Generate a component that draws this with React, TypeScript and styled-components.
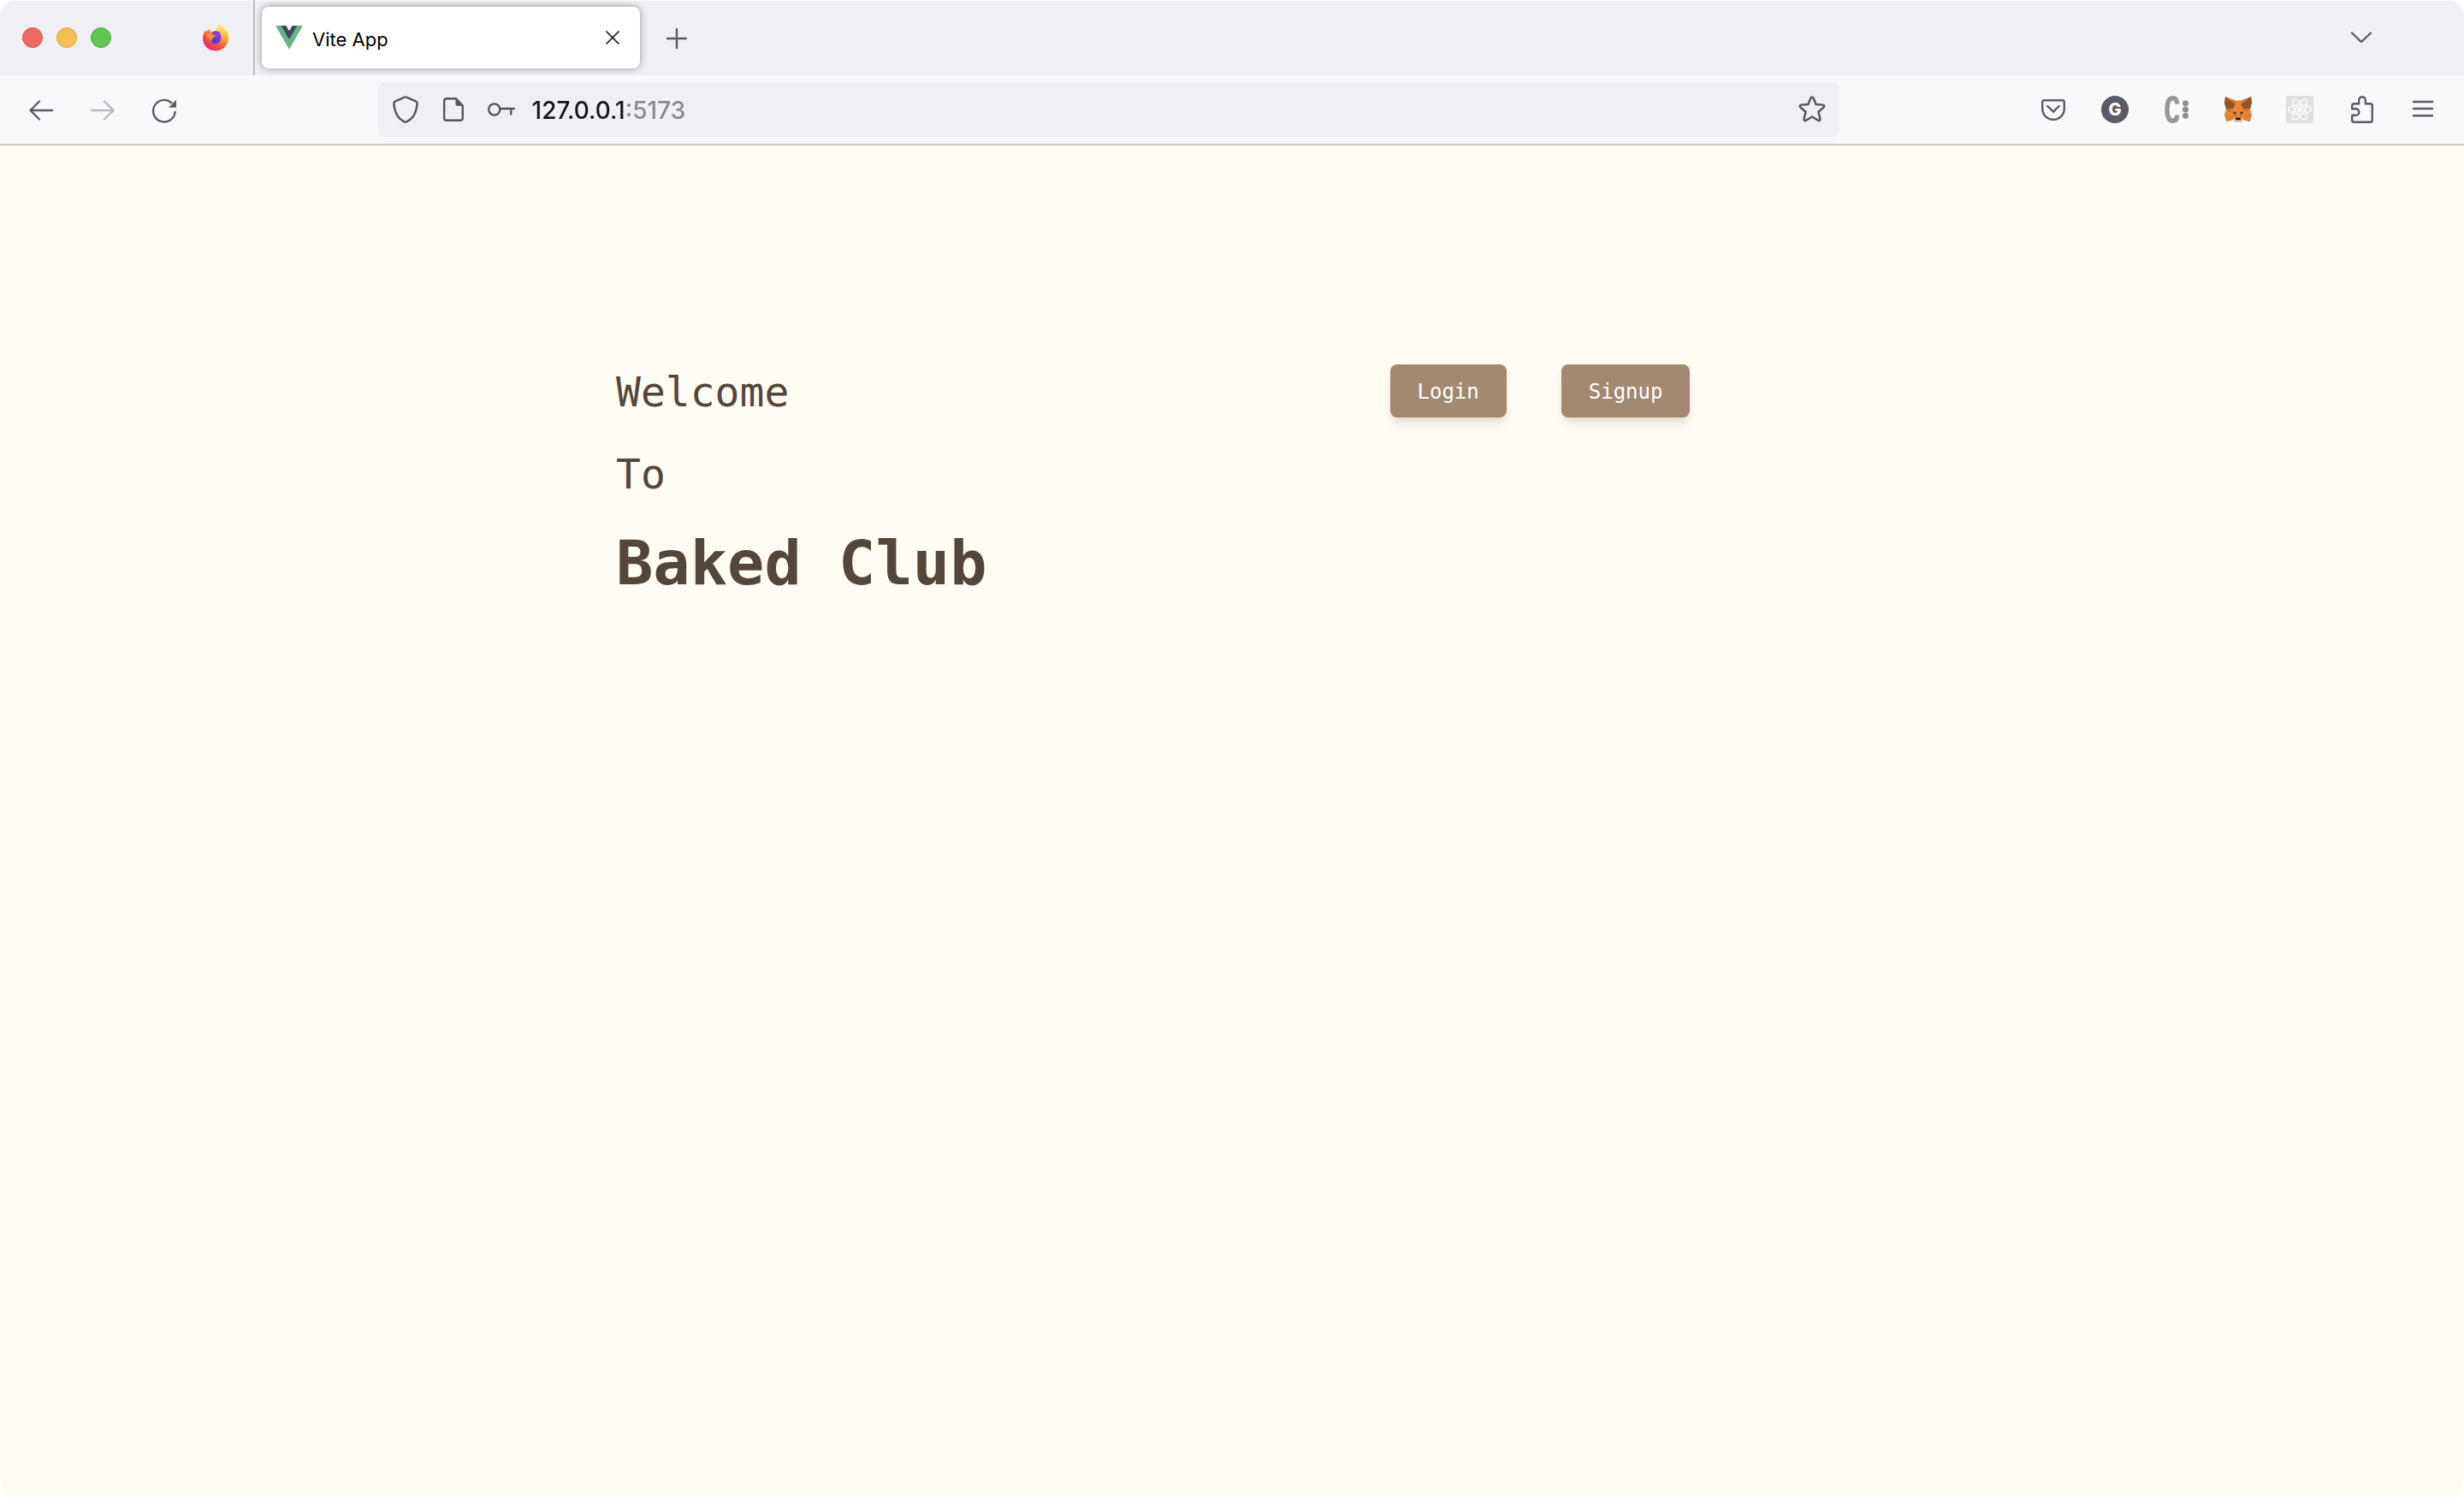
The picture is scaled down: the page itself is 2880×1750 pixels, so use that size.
import React from "react";
import styled, { createGlobalStyle } from "styled-components";

const GlobalStyle = createGlobalStyle`
  *, *::before, *::after { box-sizing: border-box; }
  body { margin: 0; background: #ffffff; }
  h1, p { margin: 0; }
  button, input { font: inherit; color: inherit; border: 0; margin: 0; padding: 0; background: none; }
  svg { display: block; }
`;

const ui = `Inter, "Liberation Sans", sans-serif`;
const mono = `"DejaVu Sans Mono", "Liberation Mono", monospace`;
const ink = "#5b5b66";

const Window = styled.div`
  display: flex;
  flex-direction: column;
  min-height: 100vh;
  overflow: hidden;
  border-radius: 20px;
  background: #fffcf4;
  font-family: ${ui};
`;

const TabStrip = styled.div`
  display: flex;
  align-items: center;
  height: 88px;
  background: #f0eff4;
  box-shadow: inset 0 1px 0 #fafafb;
`;

const WindowControls = styled.div`
  display: flex;
  gap: 16px;
  padding-left: 26px;
`;

const Light = styled.button<{ $fill: string; $edge: string }>`
  width: 24px;
  height: 24px;
  border-radius: 50%;
  background: ${(p) => p.$fill};
  border: 1px solid ${(p) => p.$edge};
`;

const PinnedTab = styled.button`
  display: grid;
  place-items: center;
  align-self: stretch;
  width: 92px;
  margin-left: 76px;
  padding-left: 2px;
  border-right: 2px solid #bdbdc1;
`;

const Tab = styled.div`
  display: flex;
  align-items: center;
  width: 442px;
  height: 72px;
  margin-left: 8px;
  padding: 0 16px;
  border-radius: 8px;
  background: #ffffff;
  box-shadow: 0 0 8px rgba(0, 0, 0, 0.4);
`;

const TabTitle = styled.button`
  display: flex;
  flex: 1;
  align-items: center;
  gap: 11px;
  font-size: 22px;
  line-height: 32px;
  color: #15141a;
`;

const TabLabel = styled.span`
  padding-top: 4px;
  color: #000000;
`;

const IconButton = styled.button<{ $width?: number; $dim?: boolean }>`
  display: grid;
  place-items: center;
  flex: none;
  width: ${(p) => p.$width ?? 72}px;
  height: 64px;
  color: ${ink};
  opacity: ${(p) => (p.$dim ? 0.4 : 1)};
`;

const TabListArea = styled.div`
  display: flex;
  flex: 1;
  justify-content: flex-end;
  padding-right: 84px;
`;

const Toolbar = styled.div`
  display: flex;
  align-items: center;
  height: 82px;
  padding: 0 12px;
  background: #f9f9fb;
  border-bottom: 2px solid #cccccf;
`;

const Group = styled.div`
  display: flex;
`;

const Spring = styled.div`
  flex: 1 1 0;
`;

const AddressArea = styled.div`
  flex: 8 1 0;
  min-width: 0;
`;

const AddressBar = styled.div`
  display: flex;
  align-items: center;
  gap: 24px;
  height: 64px;
  padding: 0 16px;
  border-radius: 8px;
  background: #f0eff4;
  color: #55555a;
`;

const AddressIcon = styled.button`
  flex: none;
  width: 32px;
  height: 32px;
`;

/* The host is dark and the port that follows it is grey. */
const Address = styled.input`
  flex: 1;
  min-width: 0;
  height: 40px;
  margin-left: -4px;
  padding-top: 2px;
  font-size: 28px;
  font-weight: 500;
  line-height: 40px;
  color: transparent;
  caret-color: #15141a;
  background: linear-gradient(90deg, #15141a 109px, #8a898e 109px);
  background-clip: text;
  -webkit-background-clip: text;
  outline: none;
`;

const Badge = styled.span`
  display: grid;
  place-items: center;
  width: 32px;
  height: 32px;
  border-radius: 50%;
  background: ${ink};
  color: #ffffff;
  font-size: 20px;
  font-weight: 800;
  line-height: 32px;
`;

const Page = styled.main`
  display: grid;
  grid-template-columns: 1fr 1fr;
  flex: 1;
  align-items: start;
  padding: 256px 25% 64px;
  font-family: ${mono};
  color: #53473c;
`;

const Greeting = styled.div`
  display: flex;
  flex-direction: column;
  gap: 32px;
`;

const Line = styled.p`
  font-size: 48px;
  line-height: 64px;
`;

const ClubName = styled.h1`
  font-size: 72px;
  line-height: 80px;
  font-weight: 700;
  white-space: nowrap;
`;

const Actions = styled.div`
  display: flex;
  justify-content: center;
  gap: 64px;
`;

const ActionButton = styled.button`
  padding: 17px 32px 15px;
  border-radius: 8px;
  background: #a38970;
  color: #ffffff;
  font-size: 24px;
  line-height: 30px;
  box-shadow: 0 8px 12px -2px rgba(0, 0, 0, 0.1), 0 4px 8px -2px rgba(0, 0, 0, 0.06);
`;

function Glyph({ children, size = 32 }: { children: React.ReactNode; size?: number }) {
  return (
    <svg
      width={size}
      height={size}
      viewBox="0 0 32 32"
      fill="none"
      stroke="currentColor"
      strokeWidth="2.4"
      strokeLinecap="round"
      strokeLinejoin="round"
      aria-hidden="true"
    >
      {children}
    </svg>
  );
}

const FirefoxLogo = () => (
  <svg width="32" height="32" viewBox="0 0 32 32" aria-hidden="true">
    <defs>
      <linearGradient id="ffBody" x1="0.85" y1="0.1" x2="0.25" y2="0.95">
        <stop offset="0" stopColor="#fff04f" />
        <stop offset="0.35" stopColor="#ffa436" />
        <stop offset="0.65" stopColor="#f8583a" />
        <stop offset="1" stopColor="#de2a72" />
      </linearGradient>
      <linearGradient id="ffFlame" x1="0.4" y1="0" x2="0.5" y2="1">
        <stop offset="0" stopColor="#fff261" />
        <stop offset="0.5" stopColor="#ffc83c" />
        <stop offset="1" stopColor="#ff8a36" stopOpacity="0" />
      </linearGradient>
      <radialGradient id="ffGlobe" cx="0.5" cy="0.75" r="0.75">
        <stop offset="0" stopColor="#4a3fb4" />
        <stop offset="0.5" stopColor="#6745da" />
        <stop offset="1" stopColor="#9b3ff0" />
      </radialGradient>
    </defs>
    <path
      d="M20.8 0.2C22.6 3.6 26 5 28 8.6C28.4 7.8 28.3 7 28.1 6.2C30.4 9 31.3 12.4 31.2 16.2C30.8 25 24.3 31.4 16 31.4C7.500 31.4 1 25 1 16.800C1 12.500 2.300 9.800 4.600 7.200L5.100 9.300C6.300 7.700 8.100 6.400 9.900 5.900C9.600 7.100 9.700 8.200 10.400 9.200C12.700 8.500 14 8.700 16.200 8.400C17 5.400 18.400 2.600 20.800 0.200Z"
      fill="url(#ffBody)"
    />
    <path
      d="M20.800 0.200C22.600 3.600 26 5 28.200 9C30.400 13.400 29.800 20 25.600 24C27 18 25 12.600 21.600 10.400C19.800 9.200 17.800 8.800 16.200 8.400C17 5.400 18.400 2.600 20.800 0.200Z"
      fill="url(#ffFlame)"
    />
    <circle cx="16" cy="17" r="6.200" fill="url(#ffGlobe)" />
    <path d="M12 9.800C14.500 7.500 19.500 7.800 22 10.800L20.600 11.200C22 12.400 22.800 14.200 22.200 16L14 14.500Z" fill="#8a3bea" />
    <path
      d="M4.800 12.600C7 11.200 9.500 11.400 12.600 12.800L16.200 13.200C16 14.600 14 15.400 12.200 16.200C11.600 17.200 11.400 18.400 11.800 19.400C8.800 17.800 6.200 16 4.800 12.600Z"
      fill="#ff9a35"
    />
  </svg>
);

const VueLogo = () => (
  <svg width="32" height="28" viewBox="0 0 32 28" aria-hidden="true">
    <polygon points="0,0 6.3,0 16,16.600 25.700,0 32,0 16,27.700" fill="#65b687" />
    <polygon points="6.300,0 12.400,0 16,6 19.600,0 25.700,0 16,16.600" fill="#3a495d" />
  </svg>
);

const ColonLogo = () => (
  <svg width="32" height="32" viewBox="0 0 32 32" fill="none" aria-hidden="true">
    <path d="M16.800 9.500C16.500 5 14.500 2.800 11.500 2.800C7 2.800 5 6.500 5 16C5 25.500 7 29.200 11.500 29.200C14.500 29.200 16.500 27 16.800 22.500" stroke="#979797" strokeWidth="5.400" />
    <circle cx="26.500" cy="8.700" r="3.500" fill="#8f8f8f" />
    <circle cx="26.500" cy="16" r="3.500" fill="#8f8f8f" />
    <circle cx="26.500" cy="23.300" r="3.500" fill="#8f8f8f" />
  </svg>
);

const FoxLogo = () => (
  <svg width="32" height="32" viewBox="0 0 32 32" aria-hidden="true">
    <polygon points="1,1 12.500,5.500 19.500,5.500 31,1 32,8 30,15.500 32,22 29.500,30 22,28 19,31 13,31 10,28 2.500,30 0,22 2,15.500 0,8" fill="#e88834" />
    <polygon points="1,1 13,9.500 10,15 2,15.500 0,8" fill="#8c5530" />
    <polygon points="31,1 19,9.500 22,15 30,15.500 32,8" fill="#8c5530" />
    <polygon points="1,1 12.500,5.500 14,11" fill="#df7a2c" />
    <polygon points="31,1 19.500,5.500 18,11" fill="#df7a2c" />
    <polygon points="2,15.500 10,15 6,20" fill="#d9752b" />
    <polygon points="30,15.500 22,15 26,20" fill="#d9752b" />
    <polygon points="9,18 14,18.500 14,24 10,22" fill="#cf6c28" />
    <polygon points="23,18 18,18.500 18,24 22,22" fill="#cf6c28" />
    <polygon points="0,22 9,22.500 10,28 2.500,30" fill="#e27f30" />
    <polygon points="32,22 23,22.500 22,28 29.500,30" fill="#e27f30" />
    <polygon points="10,18.800 13.500,19.500 13.500,21.200 11,20.500" fill="#2c3a4b" />
    <polygon points="22,18.800 18.500,19.500 18.500,21.200 21,20.500" fill="#2c3a4b" />
    <polygon points="10,27.500 13,25.500 19,25.500 22,27.500 19,31 13,31" fill="#d7c4b4" />
    <polygon points="13.200,25.500 18.800,25.500 19,28.300 13,28.300" fill="#17181a" />
  </svg>
);

const ReactBadge = () => (
  <svg width="32" height="32" viewBox="0 0 32 32" fill="none" stroke="#fafafa" strokeWidth="1.600" aria-hidden="true">
    <rect width="32" height="32" rx="2" fill="#e0e0e0" stroke="none" />
    {[0, 60, 120].map((angle) => (
      <ellipse key={angle} cx="16" cy="16" rx="13.400" ry="5.200" transform={`rotate(${angle} 16 16)`} />
    ))}
    <circle cx="16" cy="16" r="2.600" fill="#fafafa" />
  </svg>
);

const StarIcon = () => (
  <svg width="32" height="32" viewBox="1 1 22 22" fill="none" stroke="currentColor" strokeWidth="1.700" strokeLinejoin="round" aria-hidden="true">
    <path d="M11 2.700a1.100 1.100 0 0 1 2 0l2.200 5.200 5.600.4a1.100 1.100 0 0 1 .6 1.900l-4.300 3.700 1.400 5.700a1.100 1.100 0 0 1-1.600 1.200L12 17.800l-4.900 3a1.100 1.100 0 0 1-1.600-1.200l1.400-5.700-4.300-3.700a1.100 1.100 0 0 1 .6-1.900l5.600-.4z" />
  </svg>
);

export default function App() {
  return (
    <>
      <GlobalStyle />
      <Window>
        <TabStrip>
          <WindowControls>
            <Light aria-label="Close window" $fill="#ec6a5e" $edge="#d5574c" />
            <Light aria-label="Minimize window" $fill="#f4bf4f" $edge="#dba53a" />
            <Light aria-label="Zoom window" $fill="#61c554" $edge="#4daa3f" />
          </WindowControls>
          <PinnedTab aria-label="Firefox View">
            <FirefoxLogo />
          </PinnedTab>
          <Tab>
            <TabTitle>
              <VueLogo />
              <TabLabel>Vite App</TabLabel>
            </TabTitle>
            <IconButton $width={32} aria-label="Close tab">
              <Glyph>
                <path d="M9 9L23 23M23 9L9 23" stroke="#15141a" strokeWidth="1.700" />
              </Glyph>
            </IconButton>
          </Tab>
          <IconButton $width={86} aria-label="New tab">
            <Glyph>
              <path d="M16 6V28M5 17H27" />
            </Glyph>
          </IconButton>
          <TabListArea>
            <IconButton aria-label="List all tabs">
              <Glyph>
                <path d="M5 10.500L16 21L27 10.500" />
              </Glyph>
            </IconButton>
          </TabListArea>
        </TabStrip>

        <Toolbar>
          <Group>
            <IconButton aria-label="Back">
              <Glyph>
                <path d="M29 17H3.500M14 6.500L3.500 17L14 27.500" />
              </Glyph>
            </IconButton>
            <IconButton aria-label="Forward" $dim>
              <Glyph>
                <path d="M3 17H28.500M18 6.500L28.500 17L18 27.500" />
              </Glyph>
            </IconButton>
            <IconButton aria-label="Reload">
              <Glyph>
                <path d="M28.600 19A12.800 12.800 0 1 1 24.200 8" />
                <path d="M30 4.500V13.800H21Z" fill="currentColor" stroke="none" />
              </Glyph>
            </IconButton>
          </Group>
          <Spring />
          <AddressArea>
            <AddressBar>
              <AddressIcon aria-label="Tracking protection">
                <Glyph>
                  <path d="M14.900 1.700Q16 1.100 17.100 1.700L28.400 6.700Q29.800 7.400 29.600 9C29 18.500 25.500 26.500 17.300 30.400Q16 31 14.700 30.400C6.500 26.500 3 18.500 2.400 9Q2.200 7.400 3.600 6.700Z" />
                </Glyph>
              </AddressIcon>
              <AddressIcon aria-label="Site information">
                <Glyph>
                  <path d="M19 3.200H8Q5.200 3.200 5.200 6V26Q5.200 28.800 8 28.800H24Q26.800 28.800 26.800 26V11.500Z" />
                  <path d="M18.500 2.500L27.800 11.800H20.500Q18.500 11.800 18.500 9.800Z" fill="currentColor" stroke="none" />
                </Glyph>
              </AddressIcon>
              <AddressIcon aria-label="Saved login">
                <Glyph>
                  <circle cx="7.800" cy="16" r="6.600" />
                  <path d="M14.500 15H30.800M27.300 15V21.500" />
                </Glyph>
              </AddressIcon>
              <Address type="text" aria-label="Address" defaultValue="127.0.0.1:5173" spellCheck={false} />
              <AddressIcon aria-label="Bookmark this page">
                <StarIcon />
              </AddressIcon>
            </AddressBar>
          </AddressArea>
          <Spring />
          <Group>
            <IconButton aria-label="Save to Pocket">
              <Glyph>
                <path d="M5.500 5.200H26.500Q28.800 5.200 28.800 7.500V15A12.800 12.800 0 0 1 3.200 15V7.500Q3.200 5.200 5.500 5.200Z" />
                <path d="M9.300 12L16 18.700L22.700 12" />
              </Glyph>
            </IconButton>
            <IconButton aria-label="Account">
              <Badge>G</Badge>
            </IconButton>
            <IconButton aria-label="Container extension">
              <ColonLogo />
            </IconButton>
            <IconButton aria-label="MetaMask">
              <FoxLogo />
            </IconButton>
            <IconButton aria-label="React Developer Tools">
              <ReactBadge />
            </IconButton>
            <IconButton aria-label="Extensions">
              <Glyph>
                <path d="M13.200 9.200H7.500Q5.200 9.200 5.200 11.500V15.200H9.500A3.800 3.800 0 0 1 9.500 22.800H5.200V28.500Q5.200 30.800 7.500 30.800H26.500Q28.800 30.800 28.800 28.500V11.500Q28.800 9.200 26.500 9.200H20.800V5A3.800 3.800 0 0 0 13.200 5Z" />
              </Glyph>
            </IconButton>
            <IconButton aria-label="Menu">
              <Glyph>
                <path d="M5 7H27M5 15H27M5 23.300H27" />
              </Glyph>
            </IconButton>
          </Group>
        </Toolbar>

        <Page>
          <Greeting>
            <Line>Welcome</Line>
            <Line>To</Line>
            <ClubName>Baked Club</ClubName>
          </Greeting>
          <Actions>
            <ActionButton>Login</ActionButton>
            <ActionButton>Signup</ActionButton>
          </Actions>
        </Page>
      </Window>
    </>
  );
}
